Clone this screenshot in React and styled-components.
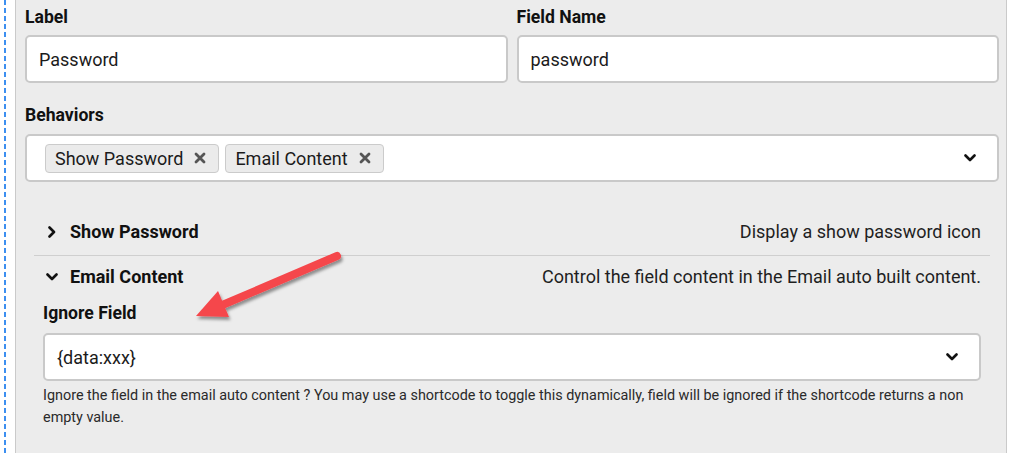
import styled, { createGlobalStyle } from "styled-components";

const GlobalStyle = createGlobalStyle`
  html, body {
    margin: 0;
    padding: 0;
    background: #ffffff;
  }
  body {
    font-family: Roboto, "Liberation Sans", Arial, sans-serif;
    color: #1b1b1b;
  }
`;

const Page = styled.div`
  position: relative;
  display: flex;
  height: 453px;
  overflow: hidden;
  padding-left: 4px;
  padding-right: 2px;
  box-sizing: border-box;
`;

const Guide = styled.div`
  width: 2px;
  margin-right: 9px;
  background: repeating-linear-gradient(
    to bottom,
    #3d8ff0 0 5px,
    transparent 5px 8px
  );
`;

const Panel = styled.div`
  flex: 1;
  background: #ececec;
  border-left: 1px solid #cacaca;
  border-right: 1px solid #cacaca;
  padding: 6px 7px 0 9px;
  box-sizing: border-box;
`;

const Row = styled.div`
  display: flex;
  gap: 9px;
`;

const Field = styled.div`
  flex: 1;
  margin-bottom: ${(p) => p.$mb || 0}px;
`;

const Label = styled.div`
  font-size: 17.6px;
  font-weight: 700;
  line-height: 22px;
  color: #111;
  margin-bottom: ${(p) => p.$mb || 7}px;
`;

const Input = styled.div`
  height: 48px;
  box-sizing: border-box;
  background: #fff;
  border: 2px solid #c9c9c9;
  border-radius: 5px;
  display: flex;
  align-items: center;
  padding: 0 12px;
  font-size: 18px;
  color: #1b1b1b;
`;

const Select = styled(Input)`
  justify-content: space-between;
  padding: 0 21px 0 ${(p) => p.$pl || 12}px;
`;

const Tags = styled.div`
  display: flex;
  gap: 6px;
`;

const Tag = styled.span`
  display: inline-flex;
  align-items: center;
  gap: 11px;
  height: 29px;
  box-sizing: border-box;
  padding: 0 12px 0 9px;
  background: #ebebeb;
  border: 1px solid #cbcbcb;
  border-radius: 4px;
  font-size: 18px;
  color: #1b1b1b;
`;

const Accordion = styled.div`
  margin: 26px 9px 0;
`;

const Item = styled.div`
  border-top: ${(p) => (p.$divider ? "1px solid #cfcfcf" : "none")};
`;

const ItemHead = styled.div`
  display: flex;
  align-items: center;
  justify-content: space-between;
  padding: ${(p) => p.$pad};
  font-size: 18px;
  line-height: 22px;
`;

const ItemTitle = styled.div`
  display: flex;
  align-items: center;
  gap: 12px;
  padding-left: 12px;
  font-weight: 700;
  color: #111;
`;

const ItemDesc = styled.div`
  padding-right: 9px;
  color: #1f1f1f;
`;

const ItemBody = styled.div`
  padding: 14px 9px 0;
`;

const Help = styled.div`
  margin-top: 4px;
  font-size: 14.4px;
  line-height: 22px;
  color: #2a2a2a;
`;

const ArrowLayer = styled.svg`
  position: absolute;
  left: 180px;
  top: 240px;
  width: 180px;
  height: 100px;
  overflow: visible;
  pointer-events: none;
`;

const Chevron = ({ dir = "down", size = 12 }) => (
  <svg width={size} height={size} viewBox="0 0 12 12">
    {dir === "down" ? (
      <polyline points="1.5,3.5 6,8 10.5,3.5" fill="none" stroke="#111" strokeWidth="2.6" strokeLinecap="round" strokeLinejoin="round" />
    ) : (
      <polyline points="3.5,1.5 8,6 3.5,10.5" fill="none" stroke="#111" strokeWidth="2.6" strokeLinecap="round" strokeLinejoin="round" />
    )}
  </svg>
);

const Cross = () => (
  <svg width="12" height="12" viewBox="0 0 12 12">
    <path d="M2 2 L10 10 M10 2 L2 10" stroke="#555" strokeWidth="2.8" strokeLinecap="round" />
  </svg>
);

const App = () => {
  return (
    <>
      <GlobalStyle />
      <Page>
        <Guide />
        <Panel>
          <Row>
            <Field $mb={21}>
              <Label>Label</Label>
              <Input>Password</Input>
            </Field>
            <Field $mb={21}>
              <Label>Field Name</Label>
              <Input>password</Input>
            </Field>
          </Row>

          <Label $mb={8}>Behaviors</Label>
          <Select $pl={18}>
            <Tags>
              <Tag>Show Password <Cross /></Tag>
              <Tag>Email Content <Cross /></Tag>
            </Tags>
            <Chevron dir="down" />
          </Select>

          <Accordion>
            <Item>
              <ItemHead $pad="13px 0 12px">
                <ItemTitle><Chevron dir="right" />Show Password</ItemTitle>
                <ItemDesc>Display a show password icon</ItemDesc>
              </ItemHead>
            </Item>
            <Item $divider>
              <ItemHead $pad="10px 0 0">
                <ItemTitle><Chevron dir="down" />Email Content</ItemTitle>
                <ItemDesc>Control the field content in the Email auto built content.</ItemDesc>
              </ItemHead>
              <ItemBody>
                <Label $mb={9}>Ignore Field</Label>
                <Select>
                  <span>{"{data:xxx}"}</span>
                  <Chevron dir="down" />
                </Select>
                <Help>
                  Ignore the field in the email auto content ? You may use a shortcode to toggle this dynamically, field will be ignored if the shortcode returns a non empty value.
                </Help>
              </ItemBody>
            </Item>
          </Accordion>
        </Panel>

        <ArrowLayer viewBox="0 0 180 100">
          <defs>
            <filter id="arrowShadow" x="-20%" y="-20%" width="140%" height="160%">
              <feDropShadow dx="1.5" dy="3" stdDeviation="1.6" floodColor="#000" floodOpacity="0.4" />
            </filter>
          </defs>
          <g filter="url(#arrowShadow)" fill="#f5474c">
            <line x1="157" y1="16" x2="40" y2="66" stroke="#f5474c" strokeWidth="8" strokeLinecap="round" />
            <polygon points="16,76 38,51 49,77" />
          </g>
        </ArrowLayer>
      </Page>
    </>
  );
};

export default App;
